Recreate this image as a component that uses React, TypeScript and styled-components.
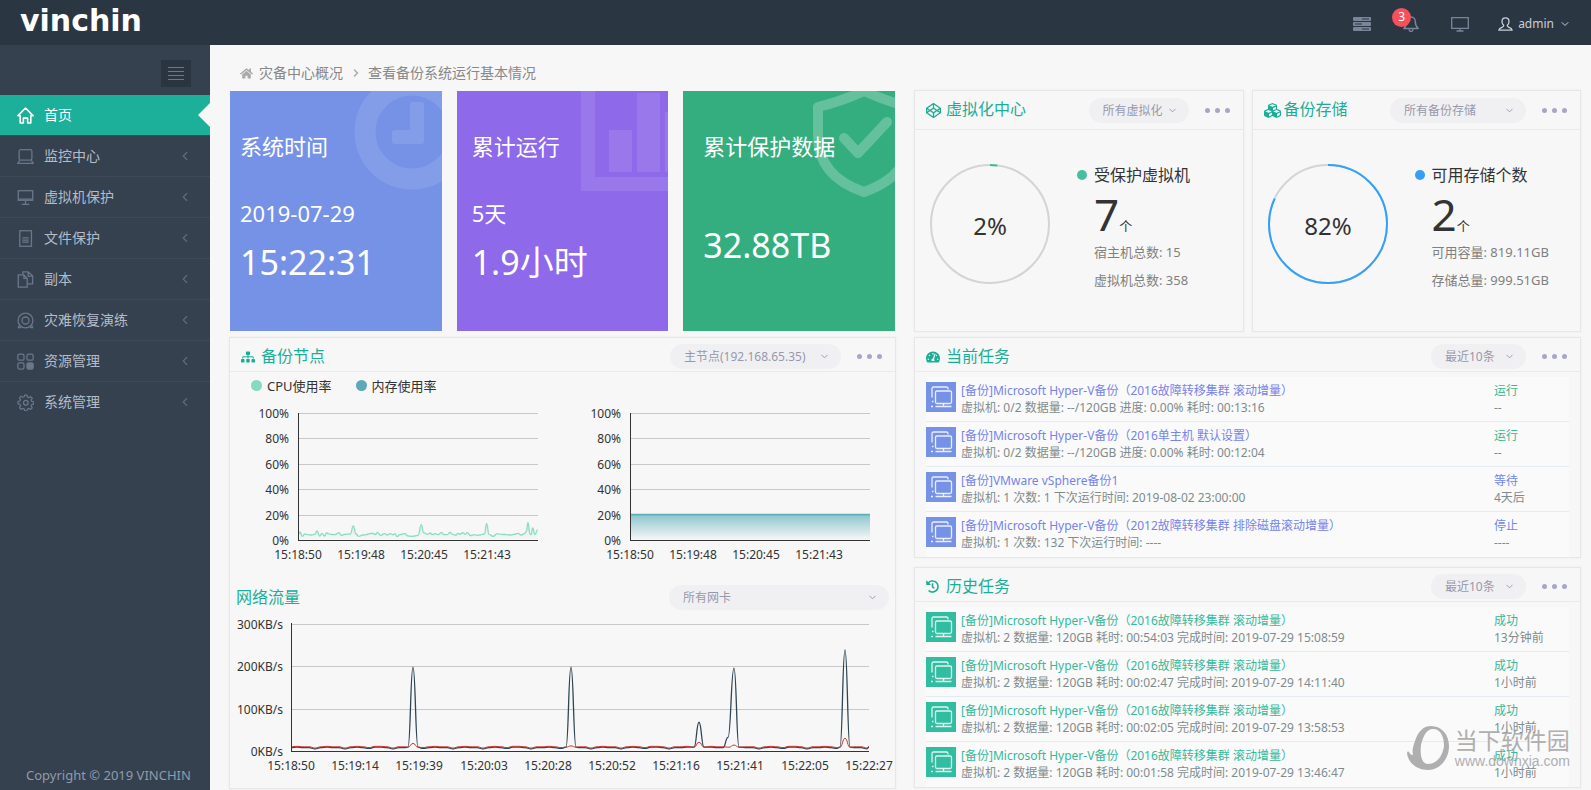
import React from "react";
import styled, { createGlobalStyle } from "styled-components";
import { ChevronDown, ChevronLeft, ChevronRight } from "lucide-react";
import {
  FaCodepen,
  FaCubes,
  FaHistory,
  FaHome,
  FaSitemap,
  FaTachometerAlt,
} from "react-icons/fa";

const FONT = '"Noto Sans", "Noto Sans CJK SC", sans-serif';
const TEAL = "#1bae97";

const GlobalStyle = createGlobalStyle`
  *, *::before, *::after { box-sizing: border-box; }
  body {
    margin: 0;
    background: #f7f7f7;
    color: #333;
    font-family: ${FONT};
    font-size: 12px;
    line-height: 17px;
  }
  button, select { font-family: inherit; margin: 0; }
  button { padding: 0; border: 0; background: none; color: inherit; cursor: pointer; }
  a { color: inherit; text-decoration: none; }
  ul { margin: 0; padding: 0; list-style: none; }
  svg { display: block; }
  h1, h2, h3, p { margin: 0; font-weight: 400; }
`;

/* ---------- page frame ---------- */

const Page = styled.div`
  position: relative;
  min-height: 100vh;
  display: flex;
  flex-direction: column;
`;

const TopBar = styled.header`
  height: 45px;
  flex: none;
  display: flex;
  align-items: center;
  justify-content: space-between;
  padding: 0 20px;
  background: #2b3643;
`;

const Logo = styled.a`
  padding-bottom: 3px;
  color: #fff;
  font-family: "DejaVu Sans", sans-serif;
  font-weight: 700;
  font-size: 30px;
  line-height: 42px;
`;

const Tools = styled.div`
  display: flex;
  align-items: center;
  gap: 32px;
  padding-top: 2px;
  color: #79869a;
`;

const ToolButton = styled.button`
  position: relative;
  display: flex;
  align-items: center;
`;

const Badge = styled.span`
  position: absolute;
  left: -11px;
  top: -7px;
  width: 19px;
  height: 19px;
  border-radius: 50%;
  background: #f7505a;
  color: #fff;
  font-size: 12px;
  line-height: 18px;
  text-align: center;
`;

const UserButton = styled.button`
  display: flex;
  align-items: center;
  gap: 5px;
  margin-left: -3px;
  color: #c6cfda;
  font-size: 12px;
  line-height: 18px;
`;

const Body = styled.div`
  flex: 1;
  display: flex;
`;

const Sidebar = styled.nav`
  width: 210px;
  flex: none;
  display: flex;
  flex-direction: column;
  background: #364150;
`;

const SidebarTop = styled.div`
  display: flex;
  justify-content: flex-end;
  padding: 15px 19px 8px;
`;

const Toggle = styled.button`
  width: 30px;
  height: 27px;
  display: grid;
  place-items: center;
  background: #2b3542;
  color: #6c7888;
`;

const MenuItem = styled.li<{ $active?: boolean }>`
  border-top: ${(p) => (p.$active ? "0" : "1px solid #3d4957")};
  background: ${(p) => (p.$active ? "#1caf9a" : "transparent")};
  color: ${(p) => (p.$active ? "#fff" : "#b4bcc8")};
`;

const MenuLink = styled.a<{ $active?: boolean }>`
  height: 40px;
  display: flex;
  align-items: center;
  padding-left: 17px;
  font-size: 14px;
  line-height: 20px;

  > svg:first-child {
    color: ${(p) => (p.$active ? "#fff" : "#6b7789")};
    margin-right: 10px;
  }
`;

const MenuLabel = styled.span`
  flex: 1;
`;

const MenuArrow = styled(ChevronLeft)`
  color: #606c7d;
  margin-right: 18px;
`;

const ActiveNotch = styled.span`
  border: 12px solid transparent;
  border-right-color: #f7f7f7;
  border-left-width: 0;
`;

const Copyright = styled.p`
  margin-top: auto;
  padding: 0 0 6px 26px;
  color: #8f9bab;
  font-size: 13px;
  line-height: 18px;
`;

const Main = styled.main`
  flex: 1;
  min-width: 0;
  display: flex;
  flex-direction: column;
  padding: 0 10px 1px 19px;
`;

const Breadcrumb = styled.div`
  height: 45px;
  display: flex;
  align-items: center;
  padding: 11px 0 0 11px;
  color: #888;
  font-size: 14px;
  line-height: 20px;

  > svg {
    color: #aaa;
  }
`;

const Crumb = styled.a`
  margin: 0 7px 0 6px;
`;

const Columns = styled.div`
  flex: 1;
  display: grid;
  grid-template-columns: minmax(0, 1fr) minmax(0, 1fr);
  grid-template-rows: 242px 1fr;
  gap: 5px 18px;
`;

/* ---------- summary cards ---------- */

const Cards = styled.div`
  display: grid;
  grid-template-columns: repeat(3, 1fr);
  gap: 15px;
  padding: 1px;
`;

const Card = styled.section<{ $color: string; $inset: number }>`
  position: relative;
  overflow: hidden;
  padding: 40px 0 0 ${(p) => p.$inset}px;
  background: ${(p) => p.$color};
  color: #fff;
`;

const CardArt = styled.svg`
  position: absolute;
  top: 0;
  right: 0;
`;

const CardTitle = styled.h2`
  position: relative;
  font-size: 22px;
  line-height: 30px;
`;

const CardLine = styled.p`
  margin-top: 37px;
  font-size: 22px;
  line-height: 30px;
`;

const CardValue = styled.p<{ $alone?: boolean }>`
  margin-top: ${(p) => (p.$alone ? 60 : 10)}px;
  font-size: 34px;
  line-height: 48px;
`;

/* ---------- panels ---------- */

const Panel = styled.section`
  display: flex;
  flex-direction: column;
  min-width: 0;
  border: 1px solid #e7e7e9;
  box-shadow: 0 0 2px #ececee;
`;

const PanelHead = styled.header<{ $tall?: boolean }>`
  height: ${(p) => (p.$tall ? 39 : 34)}px;
  flex: none;
  display: flex;
  align-items: center;
  padding: ${(p) => (p.$tall ? 0 : 4)}px 13px 0 11px;
  border-bottom: 1px solid #e6eaf2;
`;

const PanelIcon = styled.span`
  width: 18px;
  margin-right: 2px;
  color: ${TEAL};
`;

const PanelTitle = styled.h2`
  flex: 1;
  padding-bottom: 2px;
  color: ${TEAL};
  font-size: 16px;
  line-height: 24px;
  white-space: nowrap;
`;

const SelectBox = styled.label<{ $width: number }>`
  position: relative;
  width: ${(p) => p.$width}px;
  height: 25px;
  color: #9898ab;

  > svg {
    position: absolute;
    right: 11px;
    top: 7px;
    pointer-events: none;
  }
`;

const Select = styled.select`
  appearance: none;
  width: 100%;
  height: 25px;
  padding: 0 24px 0 14px;
  border: 0;
  border-radius: 13px;
  background: #f0f0f3;
  color: #9898ab;
  font-size: 12px;
  line-height: 25px;
`;

const More = styled.button`
  display: flex;
  gap: 5px;
  margin-left: 16px;
  padding: 10px 0;

  > i {
    width: 5px;
    height: 5px;
    border-radius: 50%;
    background: #a7a6c6;
  }
`;

const Pair = styled.div`
  display: grid;
  grid-template-columns: 1fr 1fr;
  gap: 8px;
`;

const GaugeBody = styled.div`
  flex: 1;
  display: flex;
  align-items: flex-start;
  padding: 34px 0 0 15px;
`;

const GaugeInfo = styled.div`
  padding-left: 27px;
`;

const GaugeLabel = styled.h3`
  display: flex;
  align-items: center;
  gap: 7px;
  font-size: 16px;
  line-height: 22px;
`;

const Dot = styled.i<{ $color: string }>`
  width: 10px;
  height: 10px;
  border-radius: 50%;
  background: ${(p) => p.$color};
`;

const GaugeCount = styled.p`
  height: 52px;
  padding-left: 17px;
  font-size: 44px;
  line-height: 56px;

  > small {
    font-size: 13px;
  }
`;

const GaugeNote = styled.p`
  padding-left: 17px;
  color: #808080;
  font-size: 13px;
  line-height: 28px;
`;

/* ---------- node panel ---------- */

const Legend = styled.div`
  height: 29px;
  display: flex;
  align-items: center;
  gap: 24px;
  padding: 0 0 2px 21px;
  font-size: 13px;
  line-height: 20px;
`;

const LegendItem = styled.span`
  display: flex;
  align-items: center;
  gap: 5px;

  > i {
    width: 11px;
    height: 11px;
  }
`;

const UsageCharts = styled.div`
  display: grid;
  grid-template-columns: 1fr 1fr;
  padding-right: 1px;
`;

const Chart = styled.svg`
  width: 100%;
  height: auto;
  font-size: 12px;
  fill: #333;
`;

const NetworkHead = styled.header`
  height: 33px;
  display: flex;
  align-items: center;
  padding: 0 6px;
`;

/* ---------- task lists ---------- */

const TaskColumn = styled.div`
  display: flex;
  flex-direction: column;
  gap: 9px;
`;

const TaskList = styled.ul`
  padding: 5px 11px 0;
`;

const TaskRow = styled.li`
  height: 45px;
  display: flex;
  gap: 5px;
  padding-top: 5px;
  background: #fafafa;
  border-bottom: 1px solid #e6eaf2;
  white-space: nowrap;

  &:last-child {
    border-bottom: 0;
  }
`;

const TaskIcon = styled.span<{ $color: string }>`
  width: 30px;
  height: 30px;
  flex: none;
  background: ${(p) => p.$color};
`;

const TaskText = styled.div`
  flex: 1;
  min-width: 0;
  color: #7f8c8d;
`;

const TaskState = styled.div`
  width: 75px;
  color: #7f8c8d;
`;

const TaskName = styled.a<{ $color: string }>`
  display: block;
  color: ${(p) => p.$color};
`;

const Watermark = styled.a`
  position: absolute;
  right: 21px;
  bottom: 20px;
  display: flex;
  align-items: center;
  gap: 6px;
  color: #a3a3a3;
  opacity: 0.85;
`;

const WatermarkName = styled.span`
  display: block;
  font-size: 23px;
  line-height: 25px;
`;

const WatermarkSite = styled.span`
  display: block;
  font-family: "Liberation Sans", sans-serif;
  font-size: 14px;
  line-height: 16px;
`;

/* ---------- icons ---------- */

function LineIcon({ children, size = 16 }: { children: React.ReactNode; size?: number }) {
  return (
    <svg width={size} height={size} viewBox="0 0 16 16" fill="none" stroke="currentColor" strokeWidth="1.2">
      {children}
    </svg>
  );
}

const icons = {
  home: (
    <path strokeWidth="1.5" strokeLinejoin="round" d="M.8 8.3 8 1l7.2 7.3H13V15h-3v-4.500H6V15H3V8.300z" />
  ),
  laptop: (
    <>
      <rect x="2" y="1.600" width="12" height="9.800" rx="1.500" />
      <path d="M2.500 11.600.8 14.400h14.400l-1.700-2.800" />
    </>
  ),
  desktop: (
    <>
      <rect x="1.200" y="1.600" width="13.600" height="9" />
      <path d="M1.200 9.600h13.600M8 11v3M4.500 14.400h7" />
    </>
  ),
  file: (
    <>
      <rect x="2.600" y=".7" width="11" height="14.600" />
      <path d="M5 7.500h6M5 9.500h6M5 11.500h6" />
    </>
  ),
  copies: (
    <>
      <path d="M1.200 3.600h5.300L9.600 7v8.200H1.200zM6.500 3.600V7h3.100" />
      <path d="M5.500 3.500V.8h5l4.200 3.800v7.600H9.700M10.500.8v4h4" />
    </>
  ),
  disaster: (
    <>
      <circle cx="8" cy="8" r="7" />
      <circle cx="8" cy="8" r="3.300" />
      <path d="M.8 14.800h3M12.200 14.800h3M2.500 12.500l-1.500 2M13.500 12.500l1.500 2" />
    </>
  ),
  resources: (
    <>
      <rect x=".8" y="1" width="5.800" height="5.800" rx="1.500" />
      <rect x="9.400" y="1" width="5.800" height="5.800" rx="1.500" />
      <rect x=".8" y="9.300" width="5.800" height="5.800" rx="1.500" />
      <rect x="9.400" y="9.300" width="5.800" height="5.800" rx="1.500" fill="currentColor" />
    </>
  ),
  settings: (
    <>
      <path
        strokeLinejoin="round"
        d="M6.800 1h2.400l.4 1.900 1.500.6 1.700-1.100 1.700 1.700-1.100 1.700.6 1.500 1.900.4v2.400l-1.900.4-.6 1.500 1.100 1.700-1.700 1.700-1.700-1.100-1.500.6-.4 1.900H6.800l-.4-1.900-1.500-.6-1.700 1.100-1.700-1.700 1.100-1.700L2 10.100l-1.900-.4V7.300L2 6.900l.6-1.500-1.100-1.700L3.200 2l1.700 1.100 1.500-.6z"
        transform="translate(.9 .2) scale(.93)"
      />
      <circle cx="8.300" cy="8.300" r="2.200" />
    </>
  ),
};

function ServerIcon() {
  return (
    <svg width="18" height="16" viewBox="0 0 18 16" fill="currentColor">
      {[1, 6, 11].map((y) => (
        <g key={y}>
          <rect x="0" y={y} width="18" height="4" rx="1" />
          <path d={`M${y === 6 ? 2 : 9} ${y + 2}h7`} stroke="#2b3643" strokeWidth="1" />
        </g>
      ))}
    </svg>
  );
}

function BellIcon() {
  return (
    <svg width="16" height="18" viewBox="0 0 16 18" fill="none" stroke="currentColor" strokeWidth="1.400">
      <path strokeLinejoin="round" d="M8 2c-3 0-4.300 2.200-4.300 4.800 0 3.600-1 5-2.900 6.700h14.400c-1.900-1.700-2.900-3.100-2.900-6.700C12.300 4.200 11 2 8 2zM6 14.500c.2 1.400 1 2 2 2s1.800-.6 2-2" />
    </svg>
  );
}

function ScreenIcon() {
  return (
    <svg width="18" height="16" viewBox="0 0 18 16" fill="none" stroke="currentColor" strokeWidth="1.300">
      <path d="M.7 1.700h16.600v10.600H.7zM9 12.500V15M5.500 15h7" />
    </svg>
  );
}

function UserIcon() {
  return (
    <svg width="15" height="14" viewBox="0 0 15 14" fill="none" stroke="currentColor" strokeWidth="1.300">
      <path strokeLinejoin="round" d="M7.500.8C5.300.8 4 2.300 4 4.400c0 1.700.7 3 1.700 3.800.2 1-.2 1.500-1.200 1.900-1.600.6-3.300 1.200-3.700 3h13.400c-.4-1.800-2.100-2.400-3.700-3-1-.4-1.400-.9-1.200-1.900C10.300 7.400 11 6.100 11 4.400 11 2.300 9.700.8 7.500.8z" />
    </svg>
  );
}

function MachinesIcon() {
  return (
    <svg width="30" height="30" viewBox="0 0 30 30" fill="none" stroke="#fff" strokeOpacity=".85" strokeWidth="1.300">
      <rect x="9.500" y="9" width="16" height="12.500" rx="1.500" />
      <path d="M22 7.500V6.500c0-1-.5-1.500-1.500-1.500h-13C6.500 5 6 5.500 6 6.500v9M6 19.500h1.500M17.500 21.500v3M9.500 24.500h16M7 24.500H5" />
    </svg>
  );
}

/* ---------- small parts ---------- */

function Dropdown({ label, value, width }: { label: string; value: string; width: number }) {
  return (
    <SelectBox $width={width}>
      <Select aria-label={label} defaultValue={value}>
        <option>{value}</option>
      </Select>
      <ChevronDown size={11} strokeWidth={2} />
    </SelectBox>
  );
}

function MoreButton() {
  return (
    <More aria-label="更多">
      <i />
      <i />
      <i />
    </More>
  );
}

type HeadProps = {
  icon: React.ReactNode;
  title: string;
  filter: string;
  width: number;
  tall?: boolean;
};

function Head({ icon, title, filter, width, tall }: HeadProps) {
  return (
    <PanelHead $tall={tall}>
      <PanelIcon>{icon}</PanelIcon>
      <PanelTitle>{title}</PanelTitle>
      <Dropdown label={title} value={filter} width={width} />
      <MoreButton />
    </PanelHead>
  );
}

function Gauge({ percent, color }: { percent: number; color: string }) {
  const length = 2 * Math.PI * 59;
  return (
    <svg width="120" height="120" viewBox="0 0 120 120" fill="none" strokeWidth="2">
      <circle cx="60" cy="60" r="59" stroke="#d4d4d4" />
      <circle
        cx="60"
        cy="60"
        r="59"
        stroke={color}
        strokeDasharray={`${(length * percent) / 100} ${length}`}
        transform="rotate(-90 60 60)"
      />
      <text x="60" y="71" textAnchor="middle" fontSize="24" fill="#333">
        {percent}%
      </text>
    </svg>
  );
}

/* ---------- charts ---------- */

type Point = [number, number];

function curve(points: Point[]) {
  return points
    .map(([x, y], i) => {
      if (i === 0) return `M${x} ${y}`;
      const [px, py] = points[i - 1];
      const mid = (px + x) / 2;
      return `C${mid} ${py} ${mid} ${y} ${x} ${y}`;
    })
    .join("");
}

/* CPU samples: [position out of 720, load out of 381] */
const CPU: Point[] = [
  [0, 14], [6, 24], [13, 11], [20, 18], [30, 16], [42, 15], [50, 17], [57, 27], [65, 12], [72, 20],
  [79, 12], [86, 21], [98, 17], [110, 16], [123, 22], [130, 14], [140, 17], [157, 18], [166, 42],
  [174, 18], [182, 11], [194, 15], [205, 16], [215, 19], [226, 20], [232, 16], [238, 23], [248, 14],
  [260, 19], [268, 15], [277, 19], [285, 16], [291, 19], [297, 10], [306, 16], [320, 19], [330, 12],
  [342, 11], [350, 12], [360, 14], [370, 46], [377, 22], [388, 17], [397, 21], [402, 16], [412, 19],
  [421, 16], [430, 22], [438, 16], [448, 16], [456, 23], [464, 17], [473, 14], [480, 20], [486, 17],
  [494, 22], [502, 17], [508, 22], [518, 13], [528, 16], [536, 14], [545, 15], [559, 18], [566, 49],
  [573, 17], [585, 11], [598, 19], [610, 17], [625, 16], [638, 15], [648, 17], [660, 20], [670, 15],
  [680, 20], [685, 26], [690, 52], [696, 18], [699, 16], [704, 36], [711, 16], [719, 31],
];

const MEMORY: Point[] = [[0, 77], [720, 77]];

function UsageChart({ id, data, color, top }: { id: string; data: Point[]; color: string; top: number }) {
  const left = 68;
  const base = 139;
  const line = curve(data.map(([t, v]) => [left + t / 3, base - v / 3]));
  return (
    <Chart viewBox="0 0 332 180">
      <defs>
        <linearGradient id={id} x1="0" y1="0" x2="0" y2="1">
          <stop offset="0" stopColor={color} stopOpacity={top} />
          <stop offset="1" stopColor={color} stopOpacity="0" />
        </linearGradient>
      </defs>
      {[100, 80, 60, 40, 20, 0].map((p) => {
        const y = Math.round(base - p * 1.27);
        return (
          <g key={p}>
            {p > 0 && <rect x={left} y={y} width="240" height="1" fill="#c8c8c8" />}
            <text x="59" y={y + 5} textAnchor="end">
              {p}%
            </text>
          </g>
        );
      })}
      <path d={`${line}V${base}H${left}Z`} fill={`url(#${id})`} />
      <path d={line} fill="none" stroke={color} strokeWidth="1.300" />
      <rect x={left} y="12" width="1" height="128" />
      <rect x={left} y={base} width="240" height="1" />
      {["15:18:50", "15:19:48", "15:20:45", "15:21:43"].map((label, i) => (
        <text key={label} x={left + i * 63} y="158" textAnchor="middle">
          {label}
        </text>
      ))}
    </Chart>
  );
}

/* Traffic in KB/s at positions along the 578 wide plot; spikes are added to a low ripple */
type Spike = { at: number; sent: number; received: number };

const SPIKES: Spike[] = [
  { at: 122, sent: 198, received: 18 },
  { at: 280, sent: 198, received: 12 },
  { at: 408, sent: 68, received: 21 },
  { at: 443, sent: 196, received: 14 },
  { at: 554, sent: 239, received: 30 },
];

const RIPPLE = [8, 9, 8, 8, 5, 8, 9, 8, 8, 5, 8, 9, 8, 6, 9, 9, 8, 5, 8, 8, 9, 8, 6];

function traffic(key: "sent" | "received", lift: number): Point[] {
  const points: Point[] = [];
  for (let i = 0; i <= 96; i += 1) {
    const x = i * 6;
    if (!SPIKES.some((s) => Math.abs(s.at - x) < 8)) {
      points.push([x, RIPPLE[i % RIPPLE.length] + lift]);
    }
  }
  SPIKES.forEach((s) => {
    points.push([s.at - 5, 9], [s.at, s[key]], [s.at + 5, 9]);
  });
  if (key === "sent") points.push([437, 32]);
  points.push([578, 9 + lift]);
  return points.filter(([x]) => !(key === "sent" && x === 438)).sort((a, b) => a[0] - b[0]);
}

function NetworkChart() {
  const left = 61;
  const base = 137;
  const place = (data: Point[]) => curve(data.map(([x, v]) => [left + x, base - v * 0.423]));
  const times = [
    "15:18:50", "15:19:14", "15:19:39", "15:20:03", "15:20:28",
    "15:20:52", "15:21:16", "15:21:41", "15:22:05", "15:22:27",
  ];
  return (
    <Chart viewBox="0 0 665 160">
      {[300, 200, 100, 0].map((v) => {
        const y = Math.round(base - v * 0.423);
        return (
          <g key={v}>
            {v > 0 && <rect x={left} y={y} width="578" height="1" fill="#c8c8c8" />}
            <text x="53" y={y + 5} textAnchor="end">
              {v}KB/s
            </text>
          </g>
        );
      })}
      <path d={place(traffic("sent", 0))} fill="none" stroke="#2f4554" strokeWidth="1.300" />
      <path d={place(traffic("received", 2))} fill="none" stroke="#c23531" />
      <rect x={left} y="9" width="1" height="129" />
      <rect x={left} y={base} width="578" height="1" />
      {times.map((label, i) => (
        <text key={label} x={left + Math.round(i * 64.2)} y="156" textAnchor="middle">
          {label}
        </text>
      ))}
    </Chart>
  );
}

/* ---------- data ---------- */

const MENU: { icon: keyof typeof icons; label: string }[] = [
  { icon: "home", label: "首页" },
  { icon: "laptop", label: "监控中心" },
  { icon: "desktop", label: "虚拟机保护" },
  { icon: "file", label: "文件保护" },
  { icon: "copies", label: "副本" },
  { icon: "disaster", label: "灾难恢复演练" },
  { icon: "resources", label: "资源管理" },
  { icon: "settings", label: "系统管理" },
];

type Task = { name: string; detail: string; state: string; when: string; stateColor: string };

const CURRENT: Task[] = [
  {
    name: "[备份]Microsoft Hyper-V备份（2016故障转移集群 滚动增量）",
    detail: "虚拟机: 0/2 数据量: --/120GB 进度: 0.00% 耗时: 00:13:16",
    state: "运行",
    when: "--",
    stateColor: "#35b98f",
  },
  {
    name: "[备份]Microsoft Hyper-V备份（2016单主机 默认设置）",
    detail: "虚拟机: 0/2 数据量: --/120GB 进度: 0.00% 耗时: 00:12:04",
    state: "运行",
    when: "--",
    stateColor: "#35b98f",
  },
  {
    name: "[备份]VMware vSphere备份1",
    detail: "虚拟机: 1 次数: 1 下次运行时间: 2019-08-02 23:00:00",
    state: "等待",
    when: "4天后",
    stateColor: "#7088e8",
  },
  {
    name: "[备份]Microsoft Hyper-V备份（2012故障转移集群 排除磁盘滚动增量）",
    detail: "虚拟机: 1 次数: 132 下次运行时间: ----",
    state: "停止",
    when: "----",
    stateColor: "#7088e8",
  },
];

const HISTORY: Task[] = [
  ["00:54:03", "15:08:59", "13分钟前"],
  ["00:02:47", "14:11:40", "1小时前"],
  ["00:02:05", "13:58:53", "1小时前"],
  ["00:01:58", "13:46:47", "1小时前"],
].map(([spent, end, when]) => ({
  name: "[备份]Microsoft Hyper-V备份（2016故障转移集群 滚动增量）",
  detail: `虚拟机: 2 数据量: 120GB 耗时: ${spent} 完成时间: 2019-07-29 ${end}`,
  state: "成功",
  when,
  stateColor: "#35b9a0",
}));

function Tasks({ items, tile, link }: { items: Task[]; tile: string; link: string }) {
  return (
    <TaskList>
      {items.map((t) => (
        <TaskRow key={t.name + t.detail}>
          <TaskIcon $color={tile}>
            <MachinesIcon />
          </TaskIcon>
          <TaskText>
            <TaskName href="#" $color={link}>
              {t.name}
            </TaskName>
            <p>{t.detail}</p>
          </TaskText>
          <TaskState>
            <TaskName as="p" $color={t.stateColor}>
              {t.state}
            </TaskName>
            <p>{t.when}</p>
          </TaskState>
        </TaskRow>
      ))}
    </TaskList>
  );
}

/* ---------- page ---------- */

export default function App() {
  return (
    <Page>
      <GlobalStyle />
      <TopBar>
        <Logo href="#">vinchin</Logo>
        <Tools>
          <ToolButton aria-label="服务器">
            <ServerIcon />
          </ToolButton>
          <ToolButton aria-label="告警">
            <BellIcon />
            <Badge>3</Badge>
          </ToolButton>
          <ToolButton aria-label="大屏">
            <ScreenIcon />
          </ToolButton>
          <UserButton>
            <UserIcon />
            admin
            <ChevronDown size={12} strokeWidth={2} />
          </UserButton>
        </Tools>
      </TopBar>

      <Body>
        <Sidebar>
          <SidebarTop>
            <Toggle aria-label="折叠菜单">
              <svg width="16" height="14" viewBox="0 0 16 14" fill="currentColor">
                {[0, 4, 8, 12].map((y) => (
                  <rect key={y} y={y} width="16" height="1" />
                ))}
              </svg>
            </Toggle>
          </SidebarTop>
          <ul>
            {MENU.map((m, i) => (
              <MenuItem key={m.label} $active={i === 0}>
                <MenuLink href="#" $active={i === 0}>
                  <LineIcon size={17}>{icons[m.icon]}</LineIcon>
                  <MenuLabel>{m.label}</MenuLabel>
                  {i === 0 ? <ActiveNotch /> : <MenuArrow size={14} strokeWidth={2} />}
                </MenuLink>
              </MenuItem>
            ))}
          </ul>
          <Copyright>Copyright © 2019 VINCHIN</Copyright>
        </Sidebar>

        <Main>
          <Breadcrumb>
            <FaHome size={13} />
            <Crumb href="#">灾备中心概况</Crumb>
            <ChevronRight size={12} strokeWidth={3} />
            <Crumb href="#">查看备份系统运行基本情况</Crumb>
          </Breadcrumb>

          <Columns>
            <Cards>
              <Card $color="#7692e7" $inset={10}>
                <CardArt width="90" height="110" fill="#fff" fillOpacity=".1">
                  <circle cx="60" cy="41" r="47" fill="none" stroke="#fff" strokeOpacity=".1" strokeWidth="21" />
                  <path d="M61 11h8a3 3 0 0 1 3 3v36a3 3 0 0 1-3 3H43a3 3 0 0 1-3-3v-8a3 3 0 0 1 3-3h15V14a3 3 0 0 1 3-3z" />
                </CardArt>
                <CardTitle>系统时间</CardTitle>
                <CardLine>2019-07-29</CardLine>
                <CardValue>15:22:31</CardValue>
              </Card>
              <Card $color="#8e69ea" $inset={15}>
                <CardArt width="90" height="110" fill="#fff" fillOpacity=".1">
                  <path d="M3 0h14v86h73v14H3zM31 39h23v42H31zM59 2h23v79H59zM87 21h3v60h-3z" />
                </CardArt>
                <CardTitle>累计运行</CardTitle>
                <CardLine>5天</CardLine>
                <CardValue>1.9小时</CardValue>
              </Card>
              <Card $color="#34ae7e" $inset={20}>
                <CardArt
                  width="90"
                  height="110"
                  fill="none"
                  stroke="#65c19d"
                  strokeWidth="10"
                  strokeLinecap="round"
                  strokeLinejoin="round"
                >
                  <path d="M59 0C46 6 30 12 13 16v29c0 28 17 46 46 56 29-10 46-28 46-56V16C88 12 72 6 59 0z" />
                  <path d="M39 47 53 62 82 31" />
                </CardArt>
                <CardTitle>累计保护数据</CardTitle>
                <CardValue $alone>32.88TB</CardValue>
              </Card>
            </Cards>

            <Pair>
              <Panel>
                <Head tall icon={<FaCodepen size={15} />} title="虚拟化中心" filter="所有虚拟化" width={100} />
                <GaugeBody>
                  <Gauge percent={2} color="#3dbd9f" />
                  <GaugeInfo>
                    <GaugeLabel>
                      <Dot $color="#44c0a1" />
                      受保护虚拟机
                    </GaugeLabel>
                    <GaugeCount>
                      7<small>个</small>
                    </GaugeCount>
                    <GaugeNote>宿主机总数: 15</GaugeNote>
                    <GaugeNote>虚拟机总数: 358</GaugeNote>
                  </GaugeInfo>
                </GaugeBody>
              </Panel>
              <Panel>
                <Head tall icon={<FaCubes size={17} />} title="备份存储" filter="所有备份存储" width={136} />
                <GaugeBody>
                  <Gauge percent={82} color="#32a1f9" />
                  <GaugeInfo>
                    <GaugeLabel>
                      <Dot $color="#359ff8" />
                      可用存储个数
                    </GaugeLabel>
                    <GaugeCount>
                      2<small>个</small>
                    </GaugeCount>
                    <GaugeNote>可用容量: 819.11GB</GaugeNote>
                    <GaugeNote>存储总量: 999.51GB</GaugeNote>
                  </GaugeInfo>
                </GaugeBody>
              </Panel>
            </Pair>

            <Panel>
              <Head icon={<FaSitemap size={14} />} title="备份节点" filter="主节点(192.168.65.35)" width={171} />
              <Legend>
                <LegendItem>
                  <Dot $color="#87d9bf" />
                  CPU使用率
                </LegendItem>
                <LegendItem>
                  <Dot $color="#5ba9b9" />
                  内存使用率
                </LegendItem>
              </Legend>
              <UsageCharts>
                <UsageChart id="cpu-fill" data={CPU} color="#8bdcc3" top={0.3} />
                <UsageChart id="memory-fill" data={MEMORY} color="#5fb0bb" top={0.7} />
              </UsageCharts>
              <NetworkHead>
                <PanelTitle>网络流量</PanelTitle>
                <Dropdown label="网卡" value="所有网卡" width={220} />
              </NetworkHead>
              <NetworkChart />
            </Panel>

            <TaskColumn>
              <Panel>
                <Head icon={<FaTachometerAlt size={14} />} title="当前任务" filter="最近10条" width={95} />
                <Tasks items={CURRENT} tile="#7692e7" link="#7583ec" />
              </Panel>
              <Panel>
                <Head icon={<FaHistory size={13} />} title="历史任务" filter="最近10条" width={95} />
                <Tasks items={HISTORY} tile="#31bd9f" link="#35b99c" />
              </Panel>
            </TaskColumn>
          </Columns>
        </Main>
      </Body>

      <Watermark href="#">
        <svg width="42" height="44" viewBox="0 0 42 44" fill="currentColor">
          <path
            fillRule="evenodd"
            d="M24 0c11 0 18 9 18 20 0 13-9 24-21 24C10 44 1 37 0 27c0-1 1-2 2-1 1 2 2 3 4 3-1-4 0-9 2-14C11 6 16 0 24 0zm2 3c-7 0-10 8-12 16-1 9 0 19 7 19 9 0 15-9 16-18 0-9-3-17-11-17z"
          />
        </svg>
        <span>
          <WatermarkName>当下软件园</WatermarkName>
          <WatermarkSite>www.downxia.com</WatermarkSite>
        </span>
      </Watermark>
    </Page>
  );
}
